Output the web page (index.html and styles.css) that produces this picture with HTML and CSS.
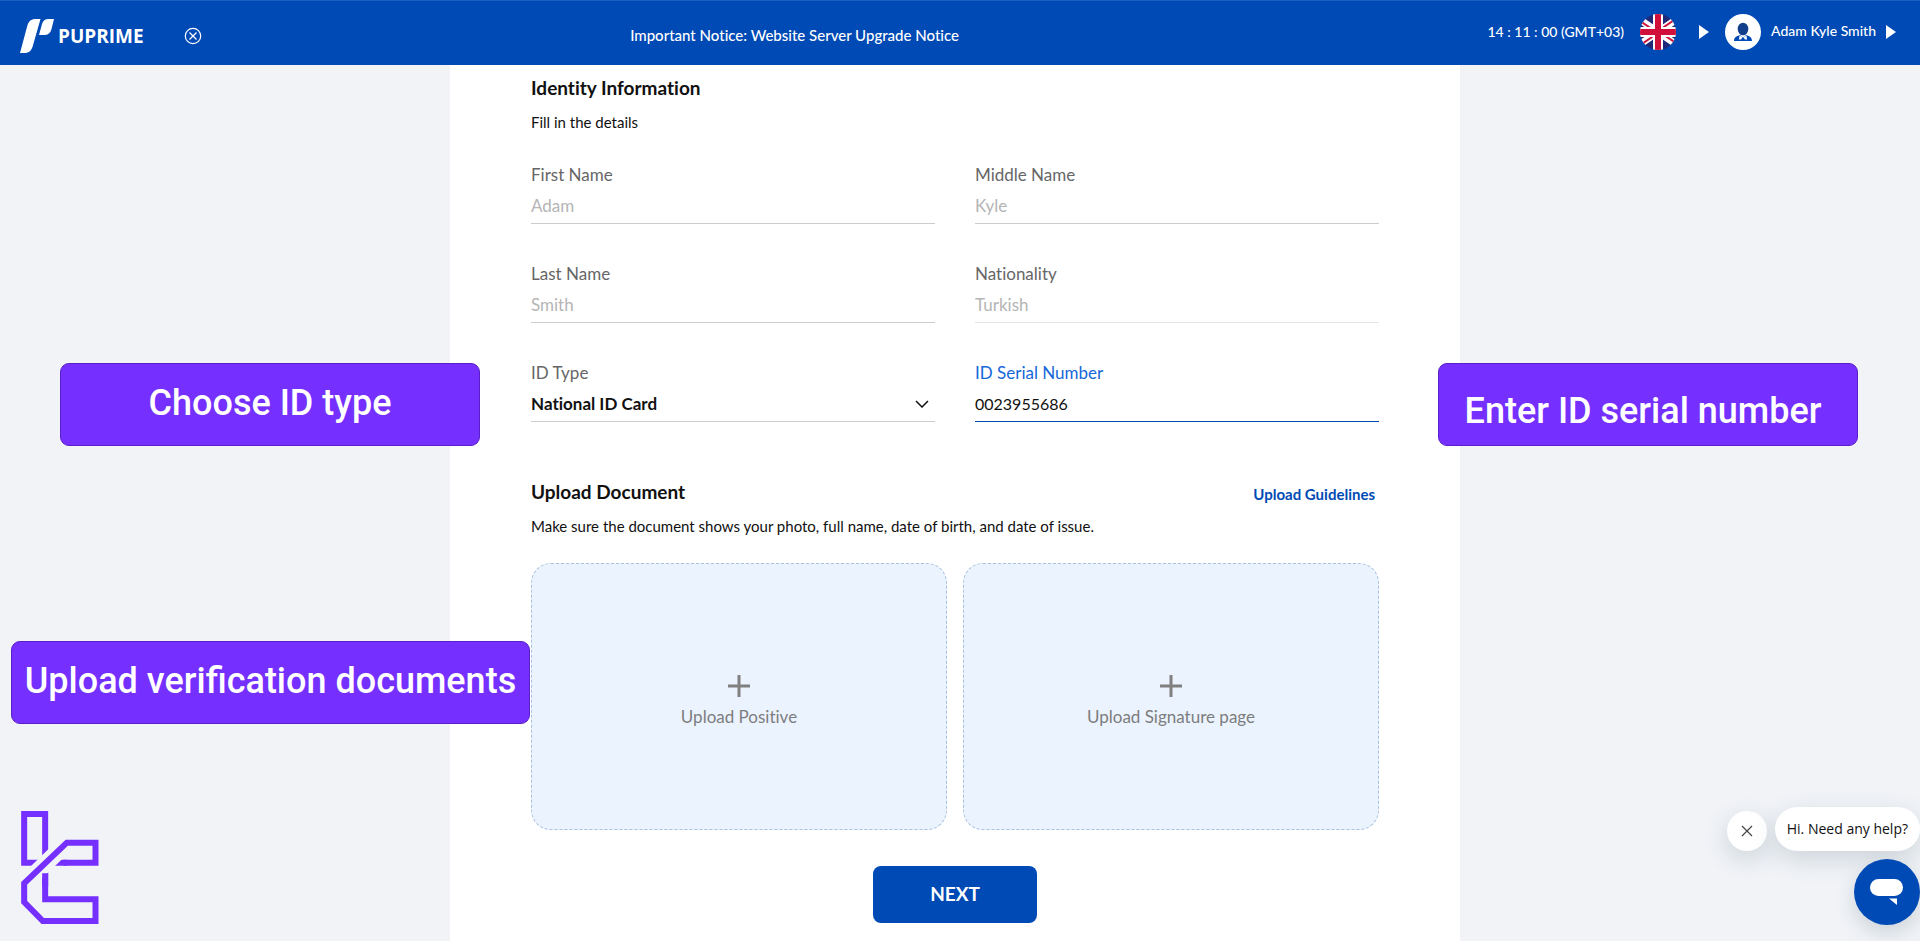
FILE: index.html
```html
<!DOCTYPE html>
<html lang="en">
<head>
<meta charset="utf-8">
<title>PU Prime – Identity Information</title>
<link rel="stylesheet" href="styles.css">
</head>
<body>
<header class="topbar">
  <a class="brand" href="#">
    <svg class="brand-mark" viewBox="0 0 34 36" aria-hidden="true">
      <path d="M0 35 7.500 7C9 2.500 12 1 16 1H20.500L12.500 29C11 33.500 8 35 4 35Z"/>
      <path d="M19 17 22 6C23 2.500 25 1 28.500 1H34L31.500 11C30.500 15 28 17 24.500 17Z"/>
    </svg>
    <span class="brand-name">PUPRIME</span>
  </a>
  <button class="menu-toggle" type="button" aria-label="Close menu">
    <svg viewBox="0 0 18 18" aria-hidden="true"><circle cx="9" cy="9" r="7.700"/><path d="M5.500 5.500l7 7M12.500 5.500l-7 7"/></svg>
  </button>
  <p class="notice">Important Notice: Website Server Upgrade Notice</p>
  <div class="account">
    <span class="clock">14 : 11 : 00 (GMT+03)</span>
    <button class="lang" type="button" aria-label="Language">
      <svg class="round" viewBox="0 0 36 36" aria-hidden="true">
        <clipPath id="disc"><circle cx="18" cy="18" r="18"/></clipPath>
        <g clip-path="url(#disc)">
          <path fill="#1e2a78" d="M0 0h36v36H0z"/>
          <path stroke="#fff" stroke-width="7" d="M-4 3l44 30M40 3L-4 33"/>
          <path stroke="#d0163a" stroke-width="2" d="M-3 5l18 12M39 31L21 19M40 2L21 15M-4 34l19-13"/>
          <path stroke="#fff" stroke-width="10" d="M18 0v36M0 18h36"/>
          <path stroke="#d0103a" stroke-width="6" d="M18 0v36M0 18h36"/>
        </g>
      </svg>
      <svg class="caret" viewBox="0 0 10 14" aria-hidden="true"><path d="M0 0l10 7-10 7z"/></svg>
    </button>
    <button class="user" type="button">
      <svg class="round" viewBox="0 0 36 36" aria-hidden="true">
        <circle cx="18" cy="18" r="18" fill="#fff"/>
        <ellipse cx="18" cy="15" rx="5.300" ry="6.300" fill="#123f8c"/>
        <path fill="#004ab5" d="M9 27c0-4 3-5 6-6l3 3 3-3c3 1 6 2 6 6z"/>
        <path fill="#fff" d="M14.500 21.500l3.500 2 3.500-2 .5 4h-2L18 23.500l-2 2h-2z"/>
        <path fill="#004ab5" d="M17 23.500h2l.7 3.500h-3.400z"/>
      </svg>
      <span class="user-name">Adam Kyle Smith</span>
      <svg class="caret" viewBox="0 0 10 14" aria-hidden="true"><path d="M0 0l10 7-10 7z"/></svg>
    </button>
  </div>
</header>

<main class="page">
  <form class="card">
    <h1 class="title">Identity Information</h1>
    <p class="hint">Fill in the details</p>
    <div class="fields">
      <div class="field"><label for="first">First Name</label><input id="first" value="Adam" disabled></div>
      <div class="field"><label for="middle">Middle Name</label><input id="middle" value="Kyle" disabled></div>
      <div class="field"><label for="last">Last Name</label><input id="last" value="Smith" disabled></div>
      <div class="field faint"><label for="nation">Nationality</label><input id="nation" value="Turkish" disabled></div>
      <div class="field select">
        <label for="idtype">ID Type</label>
        <div class="select-box">
          <select id="idtype"><option>National ID Card</option></select>
          <svg class="chevron" viewBox="0 0 14 8" aria-hidden="true"><path d="M1 1l6 6 6-6"/></svg>
        </div>
      </div>
      <div class="field active"><label for="serial">ID Serial Number</label><input id="serial" value="0023955686"></div>
    </div>
    <div class="upload-head">
      <h2 class="title">Upload Document</h2>
      <a class="guide" href="#">Upload Guidelines</a>
    </div>
    <p class="hint">Make sure the document shows your photo, full name, date of birth, and date of issue.</p>
    <div class="uploads">
      <button class="drop" type="button">
        <svg class="plus" viewBox="0 0 22 22" aria-hidden="true"><path d="M11 0v22M0 11h22"/></svg>
        <span>Upload Positive</span>
      </button>
      <button class="drop" type="button">
        <svg class="plus" viewBox="0 0 22 22" aria-hidden="true"><path d="M11 0v22M0 11h22"/></svg>
        <span>Upload Signature page</span>
      </button>
    </div>
    <button class="next" type="submit">NEXT</button>
  </form>
</main>

<div class="callout callout-type">Choose ID type</div>
<div class="callout callout-serial">Enter ID serial number</div>
<div class="callout callout-docs">Upload verification documents</div>

<svg class="watermark" viewBox="63 63 233 339" aria-hidden="true">
  <path class="line" d="M135 200V72H72V218H125M150 218H200M135 230V290"/>
  <path class="gap" d="M92 263L185 173"/>
  <path class="line" d="M190 218H286V158H200L72 280V336L128 393H286V328H135V250"/>
</svg>

<aside class="chat">
  <div class="chat-row">
    <button class="chat-close" type="button" aria-label="Dismiss">
      <svg viewBox="0 0 12 12" aria-hidden="true"><path d="M1 1l10 10M11 1L1 11"/></svg>
    </button>
    <p class="chat-text">Hi. Need any help?</p>
  </div>
  <button class="chat-open" type="button" aria-label="Open chat">
    <svg viewBox="0 0 34 28" aria-hidden="true"><rect width="33" height="17" x="0" y="1" rx="8.500"/><path d="M19 20.500h8V27z"/></svg>
  </button>
</aside>
</body>
</html>
```
FILE: styles.css
```css
* { box-sizing: border-box; }

body {
  margin: 0;
  min-height: 100vh;
  display: flex;
  flex-direction: column;
  position: relative;
  background: #f1f3f7;
  color: #111;
  font-family: Lato, "Open Sans", sans-serif;
  font-size: 16px;
  font-variant-ligatures: none;
}

h1, h2, p { margin: 0; }

button {
  border: 0;
  padding: 0;
  background: none;
  color: inherit;
  font: inherit;
  cursor: pointer;
}

svg { display: block; }

.topbar {
  display: flex;
  align-items: center;
  height: 65px;
  padding: 0 24px 0 20px;
  background: #004ab5;
  border-top: 1px solid #1a5fc2;
  color: #fff;
}

.brand {
  display: flex;
  align-items: center;
  gap: 4px;
  padding-top: 5px;
  color: #fff;
  text-decoration: none;
}
.brand-mark { width: 34px; height: 36px; fill: #fff; }
.brand-name { font: 700 19px/36px "Open Sans", sans-serif; }

.menu-toggle { margin-left: 40px; padding-top: 6px; }
.menu-toggle svg {
  width: 18px;
  height: 18px;
  fill: none;
  stroke: #fff;
  stroke-width: 1.2;
}

.notice {
  flex: 1;
  padding: 4px 100px 0 0;
  text-align: center;
  font-size: 15px;
  font-weight: 500;
}

.account {
  display: flex;
  align-items: center;
  gap: 16px;
  padding-bottom: 3px;
  font-size: 14px;
  font-weight: 500;
}
.lang { display: flex; align-items: center; gap: 23px; }
.user { display: flex; align-items: center; gap: 10px; }
.user-name { padding-bottom: 3px; }
.round { width: 36px; height: 36px; }
.caret { width: 10px; height: 14px; fill: #fff; }

.page { flex: 1; display: flex; padding: 0 10px 0 0; }

.card {
  display: flex;
  flex-direction: column;
  width: 100%;
  max-width: 1010px;
  margin: 0 auto;
  padding: 11px 81px 18px;
  background: #fff;
}

.title { font-size: 19px; line-height: 24px; font-weight: 700; }
.hint { margin-top: 11px; font-size: 15px; line-height: 22px; }

.fields {
  display: grid;
  grid-template-columns: 1fr 1fr;
  gap: 37px 40px;
  margin-top: 29px;
}
.field { display: flex; flex-direction: column; }
.field label { font-size: 17px; line-height: 26px; color: #666; }
.field input,
.field select {
  width: 100%;
  height: 36px;
  border: 0;
  border-bottom: 1px solid #ccc;
  border-radius: 0;
  padding: 0;
  background: transparent;
  color: #111;
  font: inherit;
  outline: 0;
}
.field input:disabled { color: #b5b5b5; font-size: 17px; }
.field.faint input { border-color: #e4e4e4; }
.field.active label { color: #1467d8; }
.field.active input { border-color: #004ab5; }
.select-box { display: grid; align-items: center; }
.select-box > * { grid-area: 1 / 1; }
.field select { appearance: none; font-size: 17px; font-weight: 700; }
.chevron {
  justify-self: end;
  width: 14px;
  height: 8px;
  margin-right: 6px;
  fill: none;
  stroke: #111;
  stroke-width: 1.5;
  pointer-events: none;
}

.upload-head {
  display: flex;
  justify-content: space-between;
  align-items: flex-end;
  margin-top: 58px;
}
.guide {
  padding-right: 4px;
  color: #004ab5;
  font-size: 15px;
  line-height: 20px;
  font-weight: 700;
  text-decoration: none;
}

.uploads {
  display: grid;
  grid-template-columns: 1fr 1fr;
  gap: 16px;
  margin-top: 26px;
}
.drop {
  display: flex;
  flex-direction: column;
  align-items: center;
  justify-content: center;
  gap: 8px;
  height: 267px;
  padding-top: 11px;
  border: 1px dashed #a9c0de;
  border-radius: 20px;
  background: #ebf3ff;
  color: #7d7d7d;
  font-size: 17px;
  line-height: 24px;
}
.plus { width: 22px; height: 22px; stroke: #808080; stroke-width: 3; }

.next {
  align-self: center;
  width: 164px;
  height: 57px;
  margin-top: 36px;
  padding-bottom: 3px;
  border-radius: 8px;
  background: #004ab5;
  color: #fff;
  font-size: 19px;
  font-weight: 700;
}

.callout {
  position: absolute;
  display: flex;
  align-items: center;
  justify-content: center;
  width: 420px;
  height: 83px;
  border: 1px solid #5a1fc8;
  border-radius: 9px;
  background: #7530ff;
  color: #fff;
  font: 500 36px/42px Roboto, sans-serif;
  white-space: nowrap;
}
.callout-type { left: 60px; top: 363px; padding-bottom: 4px; }
.callout-serial { right: 62px; top: 363px; padding: 12px 10px 0 0; }
.callout-docs { left: 11px; top: 641px; width: 519px; padding-bottom: 4px; }

.watermark { position: absolute; left: 21px; top: 811px; width: 78px; height: 113px; }
.watermark .line { fill: none; stroke: #7530ff; stroke-width: 18; }
.watermark .gap { fill: none; stroke: #f1f3f7; stroke-width: 50; }

.chat {
  position: absolute;
  right: 0;
  top: 807px;
  display: flex;
  flex-direction: column;
  align-items: flex-end;
  gap: 8px;
}
.chat-row { display: flex; align-items: center; gap: 8px; }
.chat-close,
.chat-text { background: #fff; box-shadow: 0 8px 24px rgba(60, 90, 100, 0.2); }
.chat-close {
  display: grid;
  place-items: center;
  width: 40px;
  height: 40px;
  margin-top: 4px;
  border-radius: 50%;
}
.chat-close svg { width: 12px; height: 12px; stroke: #444; stroke-width: 1.2; }
.chat-text {
  padding: 12px;
  border-radius: 22px;
  font: 14px/20px "Open Sans", sans-serif;
}
.chat-open {
  display: grid;
  place-items: center;
  width: 66px;
  height: 66px;
  border-radius: 50%;
  background: #004ab5;
  box-shadow: 0 8px 20px rgba(60, 90, 100, 0.2);
}
.chat-open svg { width: 34px; height: 28px; fill: #fff; }
```
